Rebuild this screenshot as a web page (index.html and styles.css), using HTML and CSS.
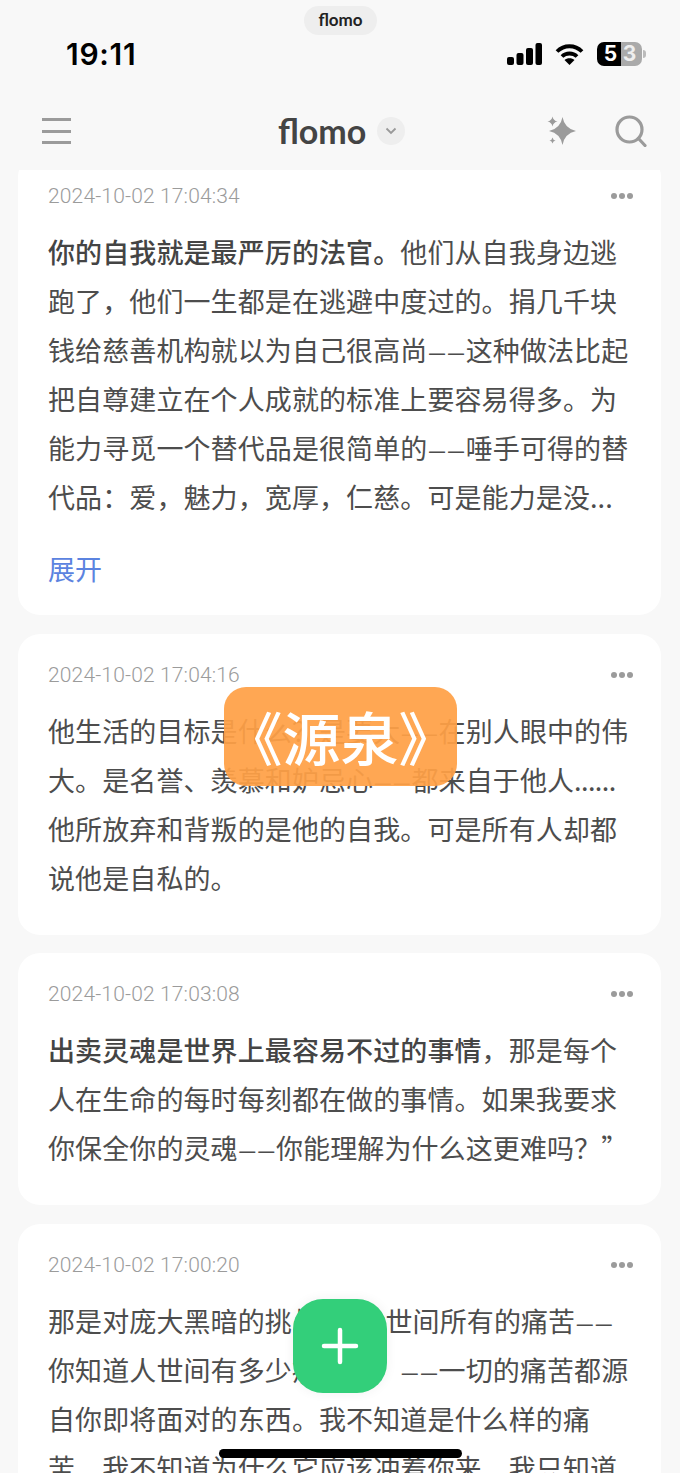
FILE: index.html
```html
<!DOCTYPE html>
<html lang="zh">
<head>
<meta charset="UTF-8">
<title>flomo</title>
<link rel="stylesheet" href="styles.css">
</head>
<body>
<div class="phone">
    <!-- 卡片列表 -->
    <div class="list">
        <div class="card">
            <div class="meta"><span class="date">2024-10-02 17:04:34</span><span class="more"><i></i><i></i><i></i></span></div>
            <p class="txt"><strong>你的自我就是最严厉的法官。</strong>他们从自我身边逃<br>跑了，他们一生都是在逃避中度过的。捐几千块<br>钱给慈善机构就以为自己很高尚<span class="dash">——</span>这种做法比起<br>把自尊建立在个人成就的标准上要容易得多。为<br>能力寻觅一个替代品是很简单的<span class="dash">——</span>唾手可得的替<br>代品：爱，魅力，宽厚，仁慈。可是能力是没...</p>
            <p class="open">展开</p>
        </div>
        <div class="card">
            <div class="meta"><span class="date">2024-10-02 17:04:16</span><span class="more"><i></i><i></i><i></i></span></div>
            <p class="txt">他生活的目标是什么？是要大<span class="dash">——</span>在别人眼中的伟<br>大。是名誉、羡慕和妒忌心<span class="dash">——</span>都来自于他人<span class="dots">......</span><br>他所放弃和背叛的是他的自我。可是所有人却都<br>说他是自私的。</p>
        </div>
        <div class="card">
            <div class="meta"><span class="date">2024-10-02 17:03:08</span><span class="more"><i></i><i></i><i></i></span></div>
            <p class="txt"><strong>出卖灵魂是世界上最容易不过的事情</strong>，那是每个<br>人在生命的每时每刻都在做的事情。如果我要求<br>你保全你的灵魂<span class="dash">——</span>你能理解为什么这更难吗？”</p>
        </div>
        <div class="card">
            <div class="meta"><span class="date">2024-10-02 17:00:20</span><span class="more"><i></i><i></i><i></i></span></div>
            <p class="txt">那是对庞大黑暗的挑战，&nbsp;&nbsp;人世间所有的痛苦<span class="dash">——</span><br>你知道人世间有多少痛苦吗？<span class="dash">——</span>一切的痛苦都源<br>自你即将面对的东西。我不知道是什么样的痛<br>苦，我不知道为什么它应该冲着你来，我只知道</p>
        </div>
    </div>

    <!-- 顶部 -->
    <div class="top">
        <div class="island">flomo</div>
        <div class="status">
            <span class="time">19:11</span>
            <span class="sys">
                <svg width="35" height="22" viewBox="0 0 35 22"><rect x="0" y="14" width="7" height="8" rx="2"/><rect x="9.500" y="10" width="7" height="12" rx="2"/><rect x="19" y="5" width="7" height="17" rx="2"/><rect x="28.500" y="0" width="6.500" height="22" rx="2"/></svg>
                <svg width="29" height="22" viewBox="0 0 29 22"><path d="M2 8.500C9 1.500 20 1.500 27 8.500M7 13.500C11 9.500 18 9.500 22 13.500" fill="none" stroke="#000" stroke-width="3.800"/><path d="M9.500 17C12 14.500 17 14.500 19.500 17L14.500 22Z"/></svg>
                <span class="batt"><span class="b5">5</span><span class="b3">3</span></span><span class="nub"></span>
            </span>
        </div>
        <div class="bar">
            <span class="menu"><i></i><i></i><i></i></span>
            <span class="brand">flomo<span class="caret"><svg width="12" height="8" viewBox="0 0 12 8"><path d="M1.500 1.500L6 6L10.500 1.500" fill="none" stroke="#999" stroke-width="1.800"/></svg></span></span>
            <span class="tools">
                <svg width="32" height="32" viewBox="0 0 32 32" fill="#9b9b9b"><path d="M16.500 2Q18.500 13.500 30 16Q18.500 18.500 16.500 30Q14.500 18.500 3 16Q14.500 13.500 16.500 2Z"/><path d="M6.500 1.500Q7.300 5.700 11.500 6.500Q7.300 7.300 6.500 11.500Q5.700 7.300 1.500 6.500Q5.700 5.700 6.500 1.500Z"/><path d="M6.500 22.500Q7 25 9.500 25.500Q7 26 6.500 28.500Q6 26 3.500 25.500Q6 25 6.500 22.500Z"/></svg>
                <svg width="32" height="32" viewBox="0 0 32 32" fill="none" stroke="#9b9b9b" stroke-width="3.200"><circle cx="14.500" cy="14.500" r="12.500"/><path d="M23.500 23.500L30 30.500" stroke-linecap="round"/></svg>
            </span>
        </div>
    </div>

    <div class="toast">《源泉》</div>
    <div class="fab"><svg width="38" height="38" viewBox="0 0 38 38"><path d="M19 3V35M3 19H35" stroke="#fff" stroke-width="4.500" stroke-linecap="round"/></svg></div>
    <div class="home"></div>
</div>
</body>
</html>
```
FILE: styles.css
```css
body,div,p{margin:0;padding:0;}
body{background:#f8f8f8;color:#4d4d4d;font-family:"Noto Sans CJK SC","Liberation Sans",sans-serif;}
.phone{position:relative;width:680px;height:1473px;overflow:hidden;background:#f8f8f8;}

.list{padding:155px 18px 0 18px;}
.card{width:643px;box-sizing:border-box;margin-bottom:18.5px;padding:26px 30px 33px;background:#fff;border-radius:22px;}
.meta{display:flex;justify-content:space-between;align-items:center;height:30px;margin-bottom:16px;}
.date{font:300 21px/30px Roboto,sans-serif;letter-spacing:.15px;color:#9b9b9b;}
.more{display:flex;gap:2px;margin-right:-2px;}
.more i{width:6px;height:6px;border-radius:50%;background:#9b9b9b;}
.txt{font-size:27px;line-height:49px;letter-spacing:.1px;white-space:nowrap;}
.txt strong{font-weight:500;color:#444;}
.dash{font-family:Lato,sans-serif;font-size:24px;line-height:0;}
.dots{letter-spacing:-.6px;}
.open{margin-top:23px;margin-bottom:-11px;font-size:27px;line-height:49px;color:#5b83e0;}

.top{position:absolute;left:0;top:0;width:680px;height:170px;background:#f8f8f8;}
.island{position:absolute;left:304px;top:6px;width:73px;height:29px;border-radius:15px;background:#eeeeee;text-align:center;font:700 17px/28px Lato,sans-serif;color:#222;}
.status{display:flex;justify-content:space-between;align-items:center;height:26px;padding:41px 34px 0 66px;}
.time{font:600 30px/26px Inter,sans-serif;color:#000;letter-spacing:.7px;}
.sys{display:flex;align-items:center;gap:13px;}
.batt{display:flex;width:45px;height:24px;border-radius:7px;overflow:hidden;font:700 21px/24px Inter,sans-serif;text-align:center;}
.b5{width:24px;background:#000;color:#fff;padding-left:3px;box-sizing:border-box;}
.b3{width:21px;background:#aaa;color:#eee;padding-right:4px;box-sizing:border-box;}
.nub{width:3px;height:8px;margin-left:-12px;border-radius:0 3px 3px 0;background:#bbb;}
.bar{position:relative;display:flex;justify-content:space-between;align-items:center;height:40px;padding:44px 33px 0 42px;}
.menu{display:flex;flex-direction:column;gap:8.5px;}
.menu i{display:block;width:29px;height:3px;background:#9b9b9b;}
.brand{position:absolute;left:278px;top:44px;display:flex;align-items:center;gap:11px;font:700 34px/40px Lato,sans-serif;color:#444;}
.caret{display:flex;align-items:center;justify-content:center;width:28px;height:28px;border-radius:50%;background:#eeeeee;}
.tools{display:flex;gap:37px;}

.toast{position:absolute;left:224px;top:687px;width:233px;height:99px;border-radius:22px;background:rgba(255,160,70,.93);color:#fff;text-align:center;font-size:58px;line-height:99px;font-weight:500;white-space:nowrap;}
.fab{position:absolute;left:293px;top:1299px;display:flex;align-items:center;justify-content:center;width:94px;height:94px;border-radius:30px;background:#33cf7a;box-shadow:0 0 12px rgba(0,0,0,.06);}
.home{position:absolute;left:219px;top:1449px;width:243px;height:9px;border-radius:5px;background:#000;}
```
